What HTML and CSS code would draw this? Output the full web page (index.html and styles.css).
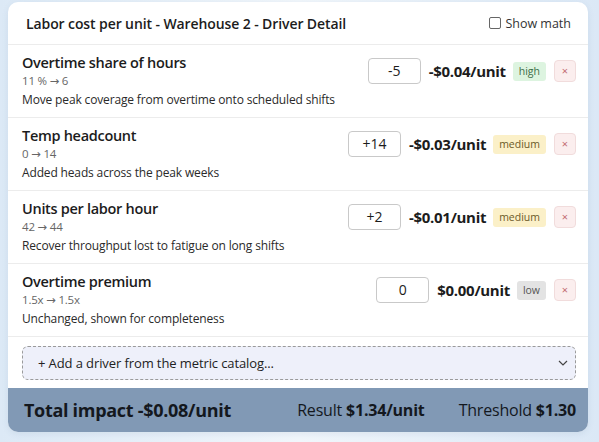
FILE: index.html
```html
<!DOCTYPE html>
<html lang="en">
<head>
  <meta charset="UTF-8">
  <title>Driver Detail</title>
  <link rel="stylesheet" href="styles.css">
</head>
<body>
<div class="card">
  <div class="head">
    <h1 class="title">Labor cost per unit - Warehouse 2 - Driver Detail</h1>
    <label class="math"><span class="box"></span>Show math</label>
  </div>

  <div class="row">
    <div class="info">
      <div class="name">Overtime share of hours</div>
      <div class="change">11 % &rarr; 6</div>
      <div class="note">Move peak coverage from overtime onto scheduled shifts</div>
    </div>
    <div class="ctrl">
      <span class="val">-5</span>
      <span class="impact">-$0.04/unit</span>
      <span class="tag high">high</span>
      <span class="del">&times;</span>
    </div>
  </div>

  <div class="row">
    <div class="info">
      <div class="name">Temp headcount</div>
      <div class="change">0 &rarr; 14</div>
      <div class="note">Added heads across the peak weeks</div>
    </div>
    <div class="ctrl">
      <span class="val">+14</span>
      <span class="impact">-$0.03/unit</span>
      <span class="tag medium">medium</span>
      <span class="del">&times;</span>
    </div>
  </div>

  <div class="row">
    <div class="info">
      <div class="name">Units per labor hour</div>
      <div class="change">42 &rarr; 44</div>
      <div class="note">Recover throughput lost to fatigue on long shifts</div>
    </div>
    <div class="ctrl">
      <span class="val">+2</span>
      <span class="impact">-$0.01/unit</span>
      <span class="tag medium">medium</span>
      <span class="del">&times;</span>
    </div>
  </div>

  <div class="row">
    <div class="info">
      <div class="name">Overtime premium</div>
      <div class="change">1.5x &rarr; 1.5x</div>
      <div class="note">Unchanged, shown for completeness</div>
    </div>
    <div class="ctrl">
      <span class="val">0</span>
      <span class="impact">$0.00/unit</span>
      <span class="tag low">low</span>
      <span class="del">&times;</span>
    </div>
  </div>

  <div class="add">
    <div class="picker">
      <span>+ Add a driver from the metric catalog...</span>
      <svg width="10" height="6" viewBox="0 0 10 6"><path d="M1 1l4 4 4-4" fill="none" stroke="#444" stroke-width="1.2"/></svg>
    </div>
  </div>

  <div class="foot">
    <div class="total">Total impact -$0.08/unit</div>
    <div class="result">Result <b>$1.34/unit</b></div>
    <div class="thresh">Threshold <b>$1.30</b></div>
  </div>
</div>
</body>
</html>
```

FILE: styles.css
```css
* {
  margin: 0;
  padding: 0;
  box-sizing: border-box;
}

body {
  font-family: "Open Sans", "DejaVu Sans", sans-serif;
  color: #1c1c1c;
  background: linear-gradient(90deg, #dce9f6 0%, #f1f6fb 50%, #dbe8f6 100%);
  height: 442px;
  padding: 2px 11px 0 8px;
}

.card {
  background: #fff;
  border-radius: 10px;
  overflow: hidden;
  box-shadow: 0 2px 6px rgba(90, 120, 160, .12);
}

.head {
  display: flex;
  align-items: center;
  justify-content: space-between;
  height: 43px;
  padding: 0 17px 0 18px;
  border-bottom: 1px solid #ececec;
}

.title {
  font-size: 14px;
  font-weight: 600;
  letter-spacing: -0.1px;
}

.math {
  display: flex;
  align-items: center;
  gap: 4px;
  font-size: 12.5px;
  color: #333;
}

.math .box {
  width: 12px;
  height: 12px;
  border: 1px solid #666;
  border-radius: 2px;
}

.row {
  display: flex;
  justify-content: space-between;
  align-items: flex-start;
  height: 73px;
  padding: 8px 12px 0 14px;
  border-bottom: 1px solid #ececec;
}

.name {
  font-size: 14.5px;
  font-weight: 600;
  line-height: 19px;
  letter-spacing: -0.3px;
}

.change {
  font-size: 11.5px;
  color: #666;
  line-height: 18px;
  letter-spacing: -0.2px;
}

.note {
  font-size: 12px;
  color: #2a2a2a;
  line-height: 20px;
  letter-spacing: -0.15px;
}

.ctrl {
  display: flex;
  align-items: center;
  gap: 7px;
  margin-top: 5px;
}

.val {
  width: 53px;
  height: 26px;
  border: 1px solid #c9c9c9;
  border-radius: 4px;
  font-size: 14px;
  line-height: 24px;
  text-align: center;
  margin-right: 1px;
}

.impact {
  font-size: 15px;
  font-weight: 700;
  letter-spacing: -0.3px;
}

.tag {
  font-size: 10.5px;
  padding: 2px 6px;
  border-radius: 3px;
  line-height: 15px;
}

.high {
  background: #ddf4e0;
  color: #3d6e48;
}

.medium {
  background: #fbf0c8;
  color: #6b5a2a;
}

.low {
  background: #e3e3e3;
  color: #555;
}

.del {
  width: 22px;
  height: 22px;
  border: 1px solid #f1dcdc;
  background: #fbeeee;
  border-radius: 4px;
  color: #c26a72;
  font-size: 11px;
  line-height: 20px;
  text-align: center;
  margin-left: 1px;
}

.add {
  padding: 9px 12px 8px 14px;
}

.picker {
  display: flex;
  align-items: center;
  justify-content: space-between;
  height: 34px;
  padding: 0 7px 0 15px;
  background: #eef0fa;
  border: 1px dashed #9a9a9a;
  border-radius: 6px;
  font-size: 13px;
  color: #222;
  letter-spacing: -0.1px;
}

.foot {
  display: flex;
  align-items: center;
  height: 44px;
  padding: 0 12px 0 16px;
  background: #8199b5;
  color: #14181e;
}

.total {
  font-size: 18px;
  font-weight: 700;
  letter-spacing: -0.3px;
  flex: 1;
}

.result,
.thresh {
  font-size: 16px;
  letter-spacing: -0.2px;
}

.thresh {
  margin-left: 34px;
}
```
